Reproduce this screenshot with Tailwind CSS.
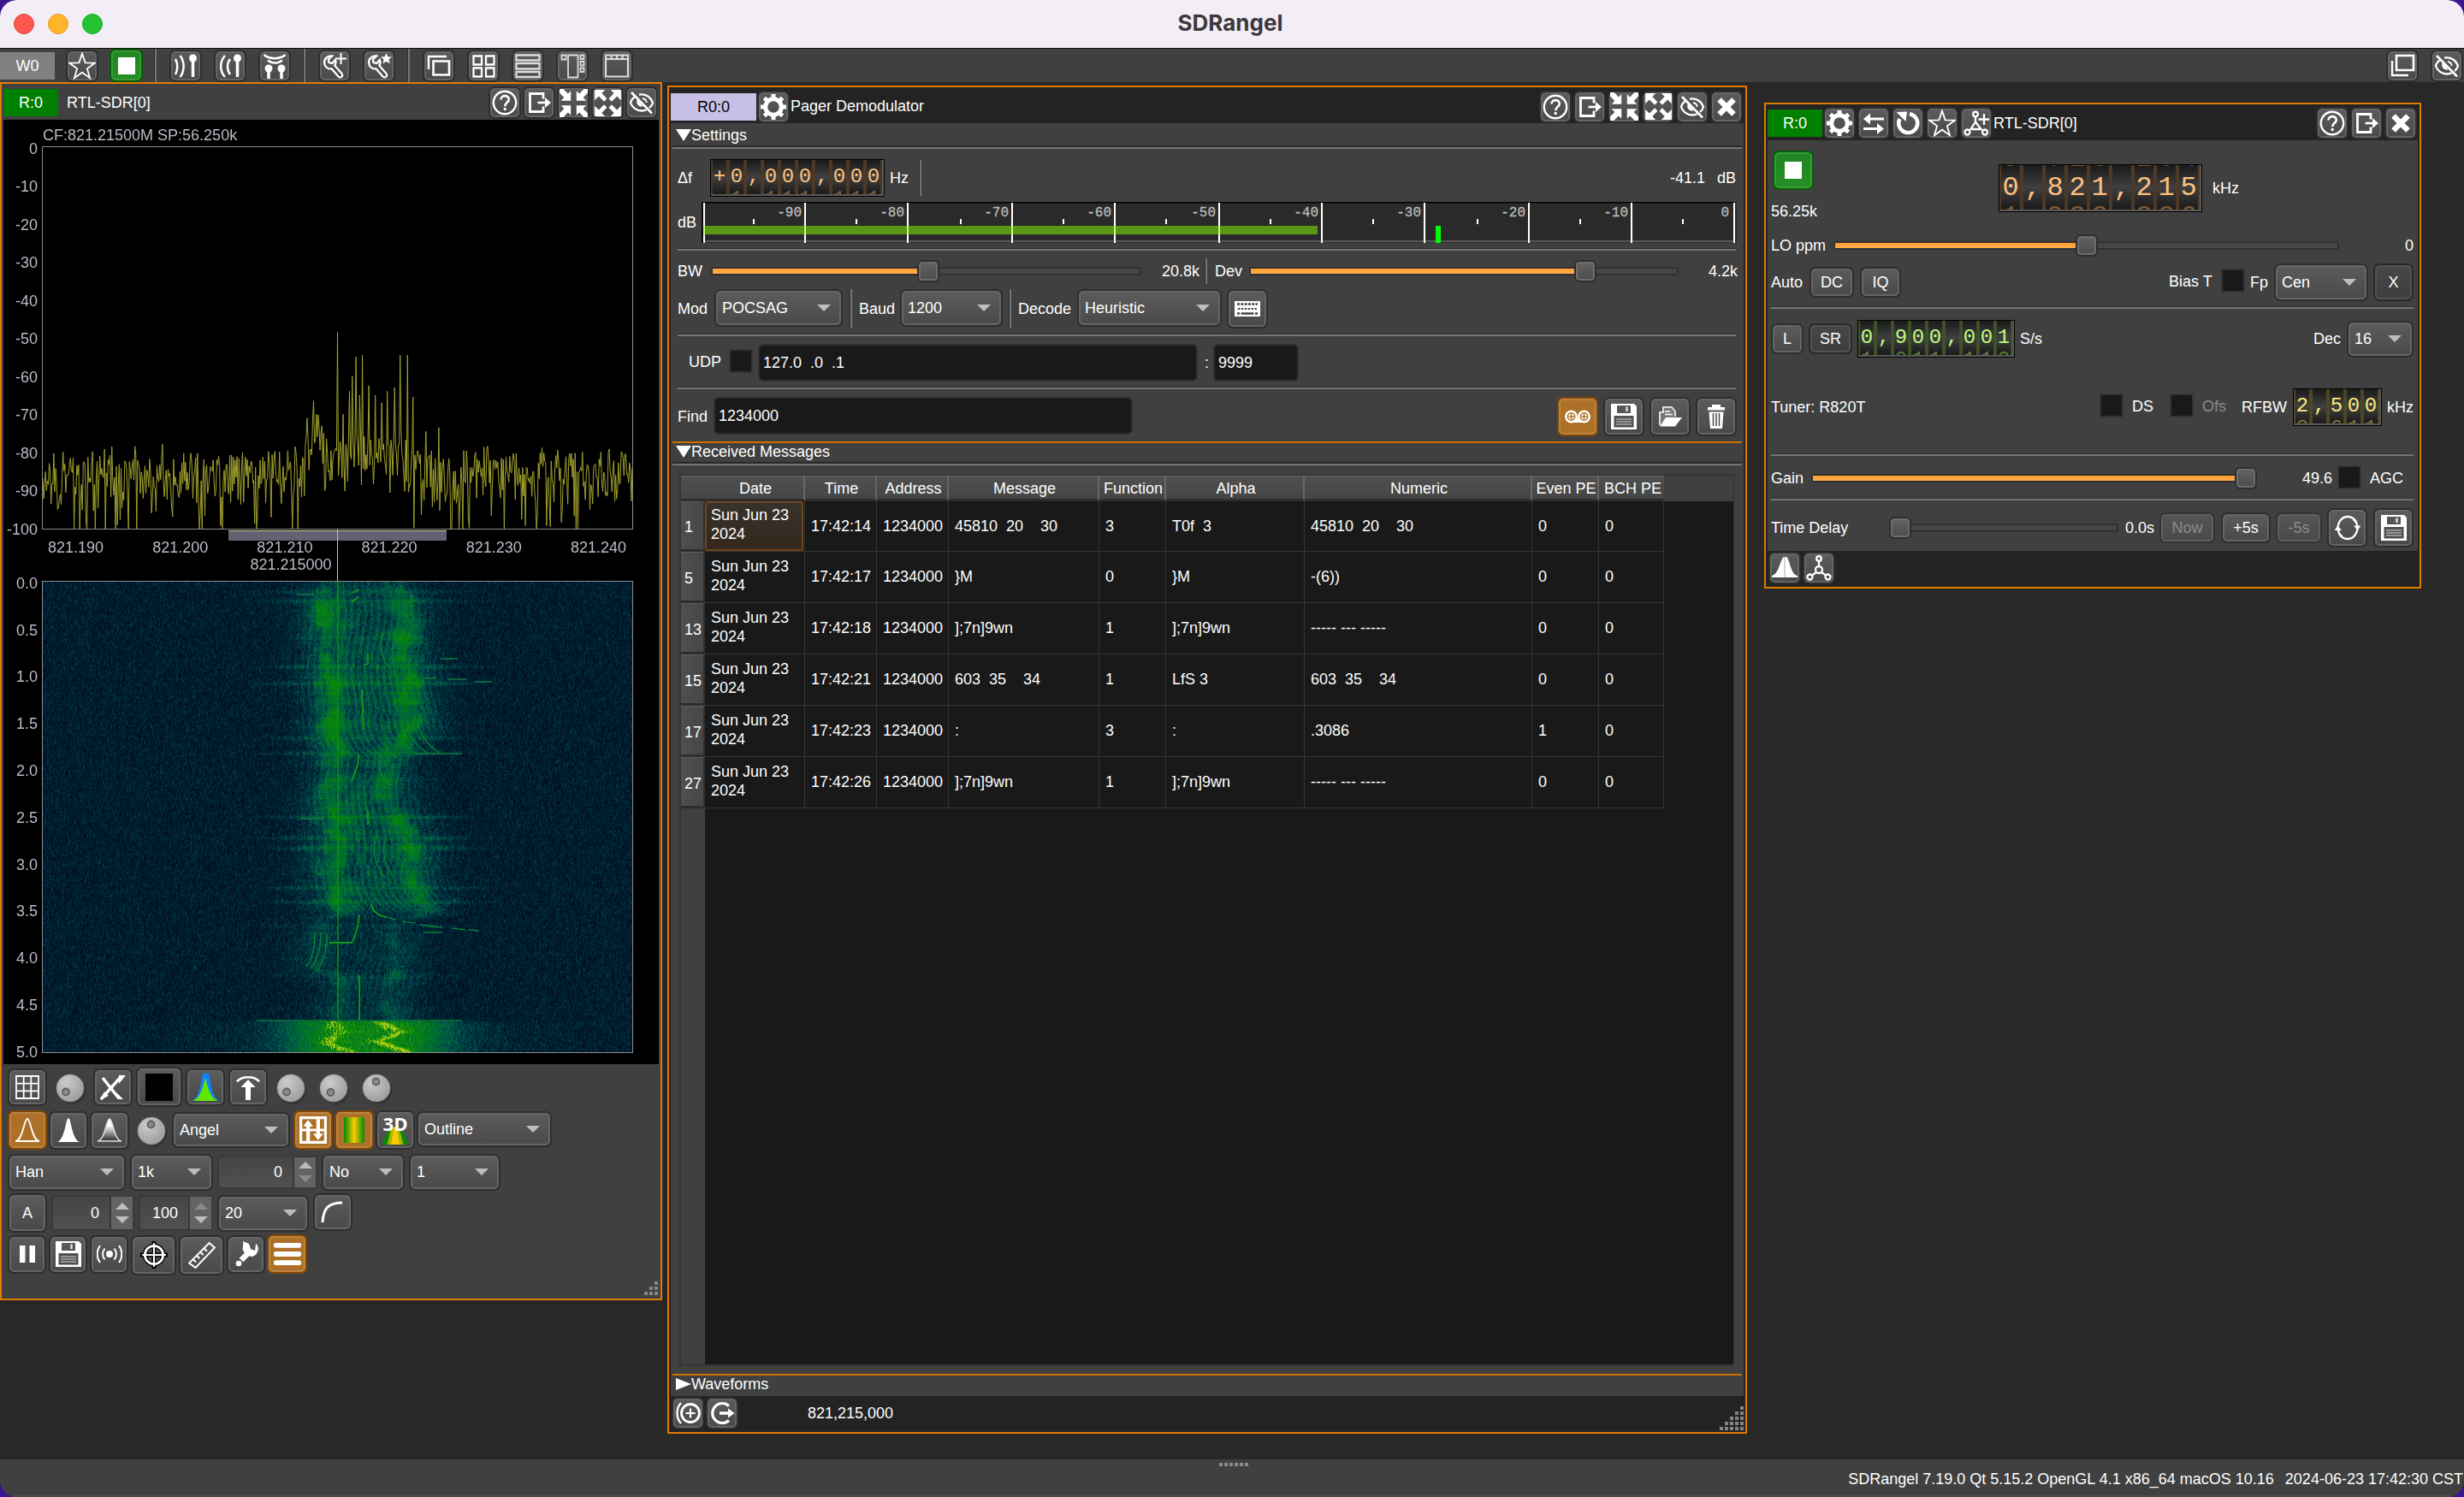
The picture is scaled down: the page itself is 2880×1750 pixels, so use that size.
<!DOCTYPE html>
<html lang="en">
<head>
<meta charset="utf-8">
<title>SDRangel</title>
<script src="https://cdn.jsdelivr.net/npm/@tailwindcss/browser@4"></script>
</head>
<body class="bg-[#3a1590] w-[2880px] h-[1750px] overflow-hidden">
<svg class="absolute size-0" xmlns="http://www.w3.org/2000/svg">
  <radialGradient id="kg" cx=".35" cy=".3" r=".8"><stop offset="0" stop-color="#cbcbcb"/><stop offset="1" stop-color="#999"/></radialGradient>
  <linearGradient id="bg1" x1="0" y1="0" x2="0" y2="1"><stop offset=".3" stop-color="#fff"/><stop offset=".9" stop-color="#444"/></linearGradient>
  <linearGradient id="cg1"><stop offset="0" stop-color="#078a07"/><stop offset=".2" stop-color="#5da505"/><stop offset=".5" stop-color="#ffcc00"/><stop offset=".8" stop-color="#5da505"/><stop offset="1" stop-color="#078a07"/></linearGradient>
  <symbol id="star" viewBox="0 0 30 30"><path d="M15 1.500l3.400 10.100 10.600.2-8.500 6.300 3 10.200L15 22.200l-8.500 6.100 3-10.200L1 11.800l10.600-.2z" fill="none" stroke="#fff" stroke-width="1.700"/></symbol>
  <symbol id="stop" viewBox="0 0 30 30"><path d="M5 5h20v20H5z" fill="#fff"/></symbol>
  <symbol id="rx" viewBox="0 0 30 30"><circle cx="23.500" cy="6" r="4.500" fill="#fff"/><path d="M23.500 8v20" stroke="#fff" stroke-width="3.500"/><path d="M3 7c3 5 3 13 0 18M8.500 3c5.500 7 5.500 18 0 25" fill="none" stroke="#fff" stroke-width="2.500"/></symbol>
  <symbol id="tx" viewBox="0 0 30 30"><circle cx="23.500" cy="6" r="4.500" fill="#fff"/><path d="M23.500 8v20" stroke="#fff" stroke-width="3.500"/><path d="M9 3c-6.500 7-6.500 18 0 25M15 7c-4 5-4 13 0 18" fill="none" stroke="#fff" stroke-width="2.500"/></symbol>
  <symbol id="mimo" viewBox="0 0 30 30"><circle cx="8" cy="18" r="4.500" fill="#fff"/><circle cx="23" cy="18" r="4.500" fill="#fff"/><path d="M8 19v11M23 19v11" stroke="#fff" stroke-width="3.500"/><path d="M2.500 2c6 5.500 19 5.500 25 0M7 8.500c5 4 12 4 17 0" fill="none" stroke="#fff" stroke-width="2.500"/></symbol>
  <symbol id="wrench" viewBox="0 0 30 30"><path d="M12 3.500c-5-.8-9.800 3.500-8.800 9 .9 4.500 5 6.500 8.300 5.800l8 9.200c1.500 1.500 4 1 4.600-.8.400-1.200 0-2.200-.8-3l-8-9c1.300-2.200 1.500-4.500.6-6.700l-3.600 4-3.800-1-.6-3.700z" fill="none" stroke="#fff" stroke-width="2.300"/></symbol>
  <symbol id="wplus" viewBox="0 0 30 30"><use href="#wrench"/><path d="M22.500 0v13M16 6.500h13" stroke="#fff" stroke-width="2"/></symbol>
  <symbol id="wstar" viewBox="0 0 30 30"><use href="#wrench"/><path d="M23.500 0l1.800 4.300 4.700.3-3.600 3 1.200 4.600-4.100-2.500-4 2.500 1.100-4.600-3.600-3 4.700-.3z" fill="#fff"/></symbol>
  <symbol id="cascade" viewBox="0 0 30 30"><path d="M8.500 9.500H27v16H8.500z" fill="none" stroke="#fff" stroke-width="2.600"/><path d="M3 19V4h21" fill="none" stroke="#fff" stroke-width="2.400"/></symbol>
  <symbol id="copyw" viewBox="0 0 30 30"><path d="M8 3h20v17H8z" fill="none" stroke="#fff" stroke-width="2.600"/><path d="M3 9v17h19" fill="none" stroke="#fff" stroke-width="2.400"/></symbol>
  <symbol id="tiles" viewBox="0 0 30 30"><path d="M3.500 3.500h9.500v10H3.500zM18 3.500h9.500v10H18zM3.500 17.500h9.500v10H3.500zM18 17.500h9.500v10H18z" fill="none" stroke="#fff" stroke-width="2.300"/></symbol>
  <symbol id="rows" viewBox="0 0 30 30"><path d="M1.500 2.500h27v6h-27zM1.500 12h27v6.500h-27zM1.500 22h27v6h-27z" fill="none" stroke="#ddd" stroke-width="2.300"/></symbol>
  <symbol id="cols" viewBox="0 0 30 30"><path d="M2.500 2.500h5v5h-5zM10 2.500h11.500v26H10zM24.500 2.500h4v4.500h-4zM24.500 10h4v4.500h-4zM24.500 17.500h4V22h-4z" fill="none" stroke="#ddd" stroke-width="1.800"/></symbol>
  <symbol id="tabs" viewBox="0 0 30 30"><path d="M2 2.500h26v25H2zM2 7h26M8.500 2.500V7M15 2.500V7M21.500 2.500V7" fill="none" stroke="#ddd" stroke-width="2.200"/></symbol>
  <symbol id="help" viewBox="0 0 30 30"><circle cx="15" cy="15" r="13.200" fill="none" stroke="#fff" stroke-width="2.400"/><path d="M10.500 11.500c0-6 9.300-5.700 9.300-.3 0 3.500-4.600 3.800-4.600 8" fill="none" stroke="#fff" stroke-width="2.600"/><circle cx="15.200" cy="22.500" r="1.700" fill="#fff"/></symbol>
  <symbol id="exit" viewBox="0 0 30 30"><path d="M20 10.500V4.500H4.500v21H20v-6" fill="none" stroke="#fff" stroke-width="2.800"/><path d="M13.500 15H26" stroke="#fff" stroke-width="2.600"/><path d="M22 9l7 6-7 6z" fill="#fff"/></symbol>
  <symbol id="shrink" viewBox="0 0 30 30"><path id="ar1" d="M0 0l4 0 5 5 3-3v10.500H1.500l3.300-3.300L0 4z" fill="#fff"/><use href="#ar1" transform="translate(30 0) scale(-1 1)"/><use href="#ar1" transform="translate(0 30) scale(1 -1)"/><use href="#ar1" transform="translate(30 30) scale(-1 -1)"/></symbol>
  <symbol id="expand" viewBox="0 0 30 30"><path id="ar2" d="M1 1h11L8.500 4.500l5.500 5.800-3 3-5.700-5.600L1 12z" fill="#fff"/><use href="#ar2" transform="translate(30 0) scale(-1 1)"/><use href="#ar2" transform="translate(0 30) scale(1 -1)"/><use href="#ar2" transform="translate(30 30) scale(-1 -1)"/></symbol>
  <symbol id="eye" viewBox="0 0 30 30"><path d="M8 7.500C4.500 9.500 2.500 13 2 15c1.500 5 6.500 9.500 13 9.500 2 0 4-.4 5.700-1.200M12 5.700c8-1.500 14 3.300 16 9.300-.7 2.300-2 4.300-4 6" fill="none" stroke="#fff" stroke-width="2.300"/><path d="M10 11c-2.500 5 1.500 9.500 6.500 8.500z" fill="#fff"/><path d="M16 10c3 .5 4.500 2.500 4.700 5" fill="none" stroke="#fff" stroke-width="1.800"/><path d="M3 3l24 24.500" stroke="#fff" stroke-width="2.600"/></symbol>
  <symbol id="close" viewBox="0 0 30 30"><path d="M6.500 6.500l17 17M23.500 6.500l-17 17" stroke="#fff" stroke-width="6.500"/></symbol>
  <symbol id="gear" viewBox="0 0 30 30"><circle cx="15" cy="15" r="9.300" fill="none" stroke="#fff" stroke-width="5"/><path d="M15 0v6M15 24v6M0 15h6M24 15h6M4.400 4.400l4.200 4.200M21.400 21.400l4.200 4.200M4.400 25.600l4.200-4.200M21.400 8.600l4.200-4.200" stroke="#fff" stroke-width="5"/></symbol>
  <symbol id="swap" viewBox="0 0 30 30"><path d="M7 10h20M3 21.500h20" stroke="#fff" stroke-width="3.200"/><path d="M11 3.500L3 10l8 6.500zM19 15l8 6.500-8 6.500z" fill="#fff"/></symbol>
  <symbol id="reload" viewBox="0 0 30 30"><path d="M17 4.200A11 11 0 1 1 5.500 10" fill="none" stroke="#fff" stroke-width="4.500"/><path d="M1.500 2L14 1.500 12.500 13z" fill="#fff"/></symbol>
  <symbol id="mol" viewBox="0 0 30 30"><g fill="none" stroke="#fff" stroke-width="2.300"><circle cx="15" cy="4" r="2.800"/><circle cx="15" cy="17" r="4"/><circle cx="4.500" cy="25.500" r="3"/><circle cx="25.500" cy="25.500" r="3"/><path d="M15 7v6M12 20l-5 3.500M18 20l5 3.500"/></g></symbol>
  <symbol id="molplus" viewBox="0 0 30 30"><g fill="none" stroke="#fff" stroke-width="2.300"><circle cx="14" cy="4.500" r="2.800"/><path d="M14 7.500v6L8.500 22h12L14 13.500"/><circle cx="4.500" cy="25.500" r="3"/><circle cx="25" cy="25.500" r="3"/><path d="M24 4v13M17.500 10.500H30"/></g></symbol>
  <symbol id="grid" viewBox="0 0 30 30"><path d="M2 2h26v26H2zM2 10.700h26M2 19.300h26M10.700 2v26M19.300 2v26" fill="none" stroke="#fff" stroke-width="1.800"/></symbol>
  <symbol id="cross" viewBox="0 0 30 30"><path d="M1 29L25 2M22 28L3 4" stroke="#fff" stroke-width="3.500"/><path d="M0 30l10-5-5-5zM22 1h8l-8 10zM20 22l7 7h-7z" fill="#fff"/></symbol>
  <symbol id="black" viewBox="0 0 30 30"><path d="M0 0h30v30H0z" fill="#000"/></symbol>
  <symbol id="peakc" viewBox="0 0 30 30"><path d="M0 29c7-1 10-13 12-29h7c2 16 5 28 11 29z" fill="#0a84ff"/><path d="M0 30c8-1 12-12 15-26 3 14 7 25 15 26z" fill="#62e600"/></symbol>
  <symbol id="up" viewBox="0 0 30 30"><path d="M2 8.500C7 1.500 23 1.500 28 8.500" fill="none" stroke="#fff" stroke-width="2.600"/><path d="M15 12v18" stroke="#fff" stroke-width="6"/><path d="M6.500 15L15 6l8.500 9z" fill="#fff"/></symbol>
  <symbol id="bell" viewBox="0 0 30 30"><path d="M1 28c9-1 10-26 14-26s5 25 14 26z" fill="none" stroke="#fff" stroke-width="1.800"/></symbol>
  <symbol id="bellf" viewBox="0 0 30 30"><path d="M2 29c9-3 10-28 13-28s4 25 13 28z" fill="#fff"/></symbol>
  <symbol id="bellg" viewBox="0 0 30 30"><path d="M1 28c9-1 10-26 14-26s5 25 14 26z" fill="url(#bg1)" stroke="#ddd" stroke-width="1.600"/></symbol>
  <symbol id="invert" viewBox="0 0 30 30"><path d="M1.500 1.500h27v27h-27zM1.500 15h27" fill="none" stroke="#fff" stroke-width="3"/><path d="M9.500 6v21M20.500 3v20" stroke="#fff" stroke-width="4"/><path d="M4 11l5.500-7 5.500 7zM15 19l5.500 7 5.500-7z" fill="#fff"/></symbol>
  <symbol id="cmap" viewBox="0 0 30 30"><path d="M3 0h24v30H3z" fill="url(#cg1)"/></symbol>
  <symbol id="threed" viewBox="0 0 34 34"><path d="M2 33l8-17h14l8 17z" fill="#078a07"/><path d="M8 33l5-19h8l5 19z" fill="#a8b800"/><path d="M12.500 33l3-19h3l3 19z" fill="#ffc800"/><text x="17" y="17.500" font-family="Open Sans, sans-serif" font-weight="700" font-size="21" fill="#fff" text-anchor="middle">3D</text></symbol>
  <symbol id="curve" viewBox="0 0 30 30"><path d="M3 27C4 10 10 4 26 4" fill="none" stroke="#fff" stroke-width="3"/></symbol>
  <symbol id="pause" viewBox="0 0 30 30"><path d="M6 5h6.500v20H6zM17.500 5H24v20h-6.500z" fill="#fff"/></symbol>
  <symbol id="save" viewBox="0 0 30 30"><path fill-rule="evenodd" d="M0 0h27l3 3v27H0zM7 2v9h16V2zM3.500 14v13.500h23V14z" fill="#fff"/><path d="M6 18h18M6 21h18M6 24h18" stroke="#aaa" stroke-width="1.300"/><path d="M18.500 3.500v5.500" stroke="#ddd" stroke-width="2.500"/></symbol>
  <symbol id="bcast" viewBox="0 0 30 30"><circle cx="15" cy="15" r="4" fill="#fff"/><path d="M9.500 8.500c-3 4-3 9 0 13M20.500 8.500c3 4 3 9 0 13M4 5c-4.500 6-4.500 14 0 20M26 5c4.500 6 4.500 14 0 20" fill="none" stroke="#fff" stroke-width="2"/></symbol>
  <symbol id="target" viewBox="0 0 30 30"><path d="M15 0v30M0 15h30" stroke="#000" stroke-width="4.500"/><circle cx="15" cy="15" r="10" fill="none" stroke="#000" stroke-width="5"/><circle cx="15" cy="15" r="10" fill="none" stroke="#fff" stroke-width="2.600"/><path d="M15 2v26M2 15h26" stroke="#fff" stroke-width="2"/></symbol>
  <symbol id="ruler" viewBox="0 0 30 30"><path d="M1 24L23 2l6 5L8 29zM5.500 20l3 3M9.500 16l3 3M13.500 12l3 3M17.500 8l3 3" fill="none" stroke="#fff" stroke-width="1.900"/></symbol>
  <symbol id="spanner" viewBox="0 0 30 30"><path d="M9 22L19 12" stroke="#fff" stroke-width="6.500"/><path d="M11 0l7 3 2 6 5 2 1-8c5 3 3 13-4 15l-6-1-5-6c-1-4 1-7 0-11z" fill="#fff"/><circle cx="6" cy="26" r="3.300" fill="#fff"/></symbol>
  <symbol id="menu" viewBox="0 0 30 30"><path d="M2.500 5.500h25M2.500 15h25M2.500 24.500h25" stroke="#fff" stroke-width="5.500" stroke-linecap="round"/></symbol>
  <symbol id="kbd" viewBox="0 0 30 30"><path d="M0 6h30v18H0z" fill="#fff"/><path d="M3 9.500h24" stroke="#444" stroke-width="2.600" stroke-dasharray="3 1.300"/><path d="M4 15h22" stroke="#444" stroke-width="2" stroke-dasharray="2.400 1.500"/><path d="M3 20.500h3M7.500 20.500h15M24 20.500h3" stroke="#444" stroke-width="2.600"/></symbol>
  <symbol id="reel" viewBox="0 0 30 30"><path d="M8 17h14v5H8z" fill="#fff"/><circle cx="7.500" cy="15" r="7.500" fill="#fff"/><circle cx="22.500" cy="15" r="7.500" fill="#fff"/><g fill="none" stroke="#ad7126" stroke-width="1.500"><circle cx="7.500" cy="15" r="4.200"/><circle cx="22.500" cy="15" r="4.200"/><path d="M7.500 12v6M4.500 15h6M22.500 12v6M19.500 15h6"/></g></symbol>
  <symbol id="open" viewBox="0 0 30 30"><path d="M3 25V10h4V4h10l4 5v6" fill="#777" stroke="#ddd" stroke-width="2"/><path d="M9 9h6M9 12.500h9" stroke="#fff" stroke-width="1.600"/><path d="M10 16h19l-8 10.500H3z" fill="#fff"/></symbol>
  <symbol id="trash" viewBox="0 0 30 30"><path d="M10 1h10v3h5v3.500H5V4h5z" fill="#fff"/><path d="M6.500 9.500h17L22 29H8z" fill="#fff"/><path d="M11.500 11v15M15 11v15M18.500 11v15" stroke="#4d4d4d" stroke-width="1.500"/></symbol>
  <symbol id="loop" viewBox="0 0 30 30"><path d="M8.500 25A12 12.500 0 0 1 3.500 16C3.500 8 8.500 2 15 2c5 0 8.500 3 10.500 7M21.500 5A12 12.500 0 0 1 26.500 14C26.500 22 21.500 28 15 28c-5 0-8.500-3-10.500-7" fill="none" stroke="#fff" stroke-width="2.300"/><path d="M-.5 18l4-5.500 4.500 5.500zM22 12.500l4.500 5.500 4-5.500z" fill="#fff"/></symbol>
  <symbol id="hump" viewBox="0 0 30 30"><path d="M0 26h30v-2c-8-1-9-20-13-22h-3C10 4 8 23 0 24z" fill="#fff"/><path d="M15 2v24" stroke="#aaa"/></symbol>
  <symbol id="addch" viewBox="0 0 30 30"><circle cx="18" cy="15" r="10.500" fill="none" stroke="#fff" stroke-width="2.800"/><path d="M18 9.500v11M12.500 15h11" stroke="#fff" stroke-width="2.200"/><path d="M7 3c-6 6-6 18 0 24" fill="none" stroke="#fff" stroke-width="2.400"/></symbol>
  <symbol id="goout" viewBox="0 0 30 30"><path d="M23 6.500a11.500 11.500 0 1 0 0 17" fill="none" stroke="#fff" stroke-width="3.200"/><path d="M12 15h12" stroke="#fff" stroke-width="3.500"/><path d="M22 9.500l7.500 5.500-7.500 5.500z" fill="#fff"/></symbol>
</svg>
<div id="app"></div>
<script>
// ---- small view helpers -------------------------------------------------
const icon = (n, s = 'size-[30px]') => `<svg class="${s} shrink-0"><use href="#${n}"/></svg>`;
const face = {
  n: 'border-[#2e2e2e] from-[#5c5c5c] to-[#494949] shadow-[inset_0_0_0_2px_#656565]',
  d: 'border-[#292929] from-[#484848] to-[#3e3e3e] shadow-[inset_0_0_0_2px_#525252] text-white',
  x: 'border-[#333333] from-[#565656] to-[#494949] shadow-[inset_0_0_0_2px_#5f5f5f] text-[#8c8c8c]',
  o: 'border-[#7f4703] from-[#ac7029] to-[#ad7126] shadow-[inset_0_0_0_2px_#bd8546]',
  g: 'border-[#075c07] from-[#218421] to-[#249024] shadow-[inset_0_0_0_2px_#3a9a3a]',
};
const btn = (body, size = 'size-[38px]', kind = 'n') =>
  `<div class="${size} ${face[kind]} shrink-0 flex items-center justify-center rounded-[7px] border-2 bg-linear-to-b">${body}</div>`;
const ib = (n, size, kind, s) => btn(icon(n, s), size, kind);
const down = `<svg class="w-4 h-2 shrink-0" viewBox="0 0 16 8"><path d="M0 0h16L8 8z" fill="#bdbdbd"/></svg>`;
const combo = (t, size) => `<div class="${size} ${face.n} shrink-0 flex items-center justify-between rounded-[7px] border-2 bg-linear-to-b pl-[7px] pr-[12px]">${t}${down}</div>`;
const spin = (t, size, up = '#bdbdbd', dn = '#bdbdbd') => `<div class="${size} shrink-0 flex items-stretch rounded-[4px] border-2 border-[#3a3a3a] bg-linear-to-b from-[#454545] to-[#505050]">
  <div class="flex-1 flex items-center justify-end pr-[12px]">${t}</div>
  <div class="w-[27px] flex flex-col items-center justify-center gap-2 border-l-2 border-[#383838] bg-[#636363]">
    <svg class="w-4 h-2" viewBox="0 0 16 8"><path d="M0 8h16L8 0z" fill="${up}"/></svg><svg class="w-4 h-2" viewBox="0 0 16 8"><path d="M0 0h16L8 8z" fill="${dn}"/></svg></div></div>`;
const box = (m = '') => `<div class="${m} size-7 shrink-0 border-2 border-[#343434] bg-[#191919]"></div>`;
const input = (t, size) => `<div class="${size} shrink-0 flex items-center whitespace-pre rounded-[6px] border-2 border-[#2f2f2f] bg-[#191919] pl-1">${t}</div>`;
const hr = (m = '') => `<div class="${m} h-[3px] shrink-0 border-t border-[#2c2c2c] bg-[#767676]"></div>`;
const vr = m => `<div class="${m} w-[3px] shrink-0 border-l border-[#2c2c2c] bg-[#767676]"></div>`;
const slider = (w, pos, fill = true) => `<div class="${w} relative h-[26px] shrink-0 flex items-center">
  <div class="h-[10px] w-full rounded-[3px] border-2 border-[#303030] bg-[#464646]"><div class="h-full bg-linear-to-b from-[#ff9d2c] to-[#ffae50]" style="width:${fill ? pos : 0}px"></div></div>
  <div class="absolute top-0 size-[26px] rounded-[6px] border-2 border-[#2e2e2e] bg-linear-to-b from-[#636363] to-[#4c4c4c] shadow-[inset_0_0_0_2px_#6c6c6c]" style="left:${pos}px"></div></div>`;
const knob = (m, a, b) => `<svg class="${m} size-9 shrink-0" viewBox="0 0 36 36"><circle cx="19.500" cy="20" r="16" fill="#353535"/><circle cx="17" cy="17" r="16" fill="url(#kg)" stroke="#8f8f8f" stroke-width=".6"/><circle cx="${a}" cy="${b}" r="4" fill="#8a8a8a" stroke="#606060" stroke-width="1.800"/></svg>`;
const tone = {
  amber: ['text-[#ffc07a]', 'text-[#7d5c36]', 'border-[#4d3925]'],
  green: ['text-[#bdfb7c]', 'text-[#5f7c3a]', 'border-[#3f5126]'],
  gold: ['text-[#fbe97a]', 'text-[#7d7038]', 'border-[#4d4823]'],
};
const dial = (prev, cur, next, t, big) => {
  const cell = big ? 'w-[26px] text-[32px] leading-[34px]' : 'w-5 text-[24px] leading-[26px]';
  const drop = big ? 'pt-[1px]' : '';
  return `<div class="shrink-0 flex ${big ? 'h-14' : 'h-11'} overflow-hidden border border-black bg-[#5a5a5a] pb-[2px] pr-[2px] font-['Liberation_Mono',monospace]">` +
    [...cur].map((c, i) => `<div class="${cell} ${tone[t][2]} h-full overflow-hidden flex flex-col items-center justify-center border-x-2 bg-linear-to-b from-[#1a1a1a] via-[#404040] to-[#1a1a1a]"><div class="${drop} ${tone[t][1]} whitespace-pre flex flex-col items-center"><span>${prev[i]}</span><span class="${tone[t][0]}">${c}</span><span>${next[i]}</span></div></div>`).join('') + `</div>`;
};
const L = (w, t, x = '') => `<span class="${w} ${x} shrink-0 whitespace-nowrap">${t}</span>`;
const grip = (n) => { let s = ''; for (let r = 0; r < n; r++) for (let c = 0; c <= r; c++) s += `<rect x="${(n - 1 - c) * 6}" y="${r * 6}" width="4" height="4" fill="#858585"/>`; return `<svg width="${n * 6 - 2}" height="${n * 6 - 2}">${s}</svg>`; };
const section = (t, open, h) => `<div class="${h} shrink-0 flex items-center pl-[6px]"><svg class="w-[18px] h-[14px]" viewBox="0 0 18 14"><path d="${open ? 'M0 0h18L9 14z' : 'M0 0v14L18 7z'}" fill="#fff"/></svg>${t}</div>`;
const hr4 = `<div class="mx-[2px] h-1 shrink-0 border-t-2 border-[#282828] bg-[#767676]"></div>`;

// ---- level meter --------------------------------------------------------
const meter = (() => {
  let s = '<rect width="1210" height="48" fill="#2a2a2a"/><path d="M0 .5H1208M.5 0V48" stroke="#000" stroke-width="2"/><path d="M2 46H1208" stroke="#585858" stroke-width="2"/><rect x="3" y="28" width="717" height="10" fill="#5b9717"/>';
  const major = [3, 121, 241, 363, 483, 605, 725, 845, 967, 1087, 1207];
  const minor = [61, 181, 303, 423, 543, 665, 785, 907, 1027, 1147];
  major.forEach((x, i) => {
    s += `<path d="M${x} 1V48" stroke="#fff" stroke-width="2"/>`;
    if (i < 7 && x < 720) s += `<path d="M${x} 28V38" stroke="#c6ff70" stroke-width="2"/>`;
    if (i) s += `<text x="${x - (i === 10 ? 6 : 4)}" y="17" font-size="16" font-family="Liberation Mono" fill="#bbb" stroke="#bbb" stroke-width=".3" text-anchor="end">${i === 10 ? 0 : -100 + i * 10}</text>`;
  });
  minor.forEach(x => s += `<path d="M${x} 20V26" stroke="#fff" stroke-width="2"/>`);
  return `<svg class="shrink-0" width="1210" height="48">${s}<path d="M861 28V48" stroke="#0f0" stroke-width="6"/></svg>`;
})();

// ---- received messages --------------------------------------------------
const rows = [
  [1, '17:42:14', '45810  20    30', 3, 'T0f  3', '45810  20    30', 0],
  [5, '17:42:17', '}M', 0, '}M', '-(6))', 0],
  [13, '17:42:18', '];7n]9wn', 1, '];7n]9wn', '----- --- -----', 0],
  [15, '17:42:21', '603  35    34', 1, 'LfS 3', '603  35    34', 0],
  [17, '17:42:23', ':', 3, ':', '.3086', 1],
  [27, '17:42:26', '];7n]9wn', 1, '];7n]9wn', '----- --- -----', 0]];
const gridCols = 'grid grid-cols-[28px_117px_84px_84px_176px_78px_162px_266px_78px_76px]';
const table = `<div class="ml-[10px] mt-[10px] w-[1233px] h-[1043px] shrink-0 border-2 border-r-1 border-[#353535] bg-[linear-gradient(90deg,#404040_28px,#191919_28px)]">
  <div class="${gridCols} h-[30px] bg-[#404040]">` +
  ['', 'Date', 'Time', 'Address', 'Message', 'Function', 'Alpha', 'Numeric', 'Even PE', 'BCH PE'].map((h, i) =>
    `<div class="flex items-center justify-center overflow-hidden whitespace-nowrap border-t border-t-[#646464] border-b-3 border-b-[#2d2d2d] bg-linear-to-b from-[#505050] to-[#454545] ${i && i < 9 ? 'border-r-2 border-r-[#676767]' : ''} pt-[2px] pl-[3px]">${h}</div>`).join('') +
  `</div>` + rows.map((r, i) => {
    const c = 'border-r border-b border-[#353535] pl-[7px] flex items-center whitespace-pre';
    return `<div class="${gridCols} ${i ? 'h-[60px]' : 'h-[59px]'}">
    <div class="flex items-center pl-1 pt-[3px] border-t border-t-[#606060] border-r-2 border-r-[#303030] border-b-3 border-b-[#2d2d2d] bg-linear-to-r from-[#4f4f4f] to-[#464646]">${r[0]}</div>
    <div class="${c} leading-[22px] pb-[4px] ${i ? '' : 'relative'}">${i ? '' : '<div class="absolute inset-0 right-[1px] rounded-[3px] border-2 border-[#70461b] bg-linear-to-b from-[#37322c] to-[#35281d]"></div>'}<span class="relative">Sun Jun 23\n2024</span></div>
    ${[r[1], '1234000', r[2], r[3], r[4], r[5], r[6], 0].map(v => `<div class="${c} pb-[1px]">${v}</div>`).join('')}
  </div>`;
  }).join('') + `</div>`;

// ---- spectrum axes ------------------------------------------------------
const axes = (() => {
  const t = (x, y, s, a) => `<text x="${x}" y="${y + 6.300}" text-anchor="${a}">${s}</text>`;
  let s = t(50, 17.500, 'CF:821.21500M SP:56.250k', 'start');
  for (let i = 0; i <= 10; i++) {
    s += t(44, 33.500 + i * 44.500, i ? -i * 10 : '0', 'end');
    s += t(44, 541.500 + i * 54.800, (i / 2).toFixed(1), 'end');
  }
  ['190', '200', '210', '220', '230', '240'].forEach((v, i) => s += t(88.500 + i * 122.200, 500, '821.' + v, 'middle'));
  return s + t(340, 520, '821.215000', 'middle');
})();

document.getElementById('app').innerHTML = `
<div class="w-[2880px] h-[1750px] overflow-hidden rounded-[20px] bg-[#282828] flex flex-col text-white text-[18px] leading-[22px] font-['Liberation_Sans',Arial,sans-serif]">
  <header class="h-14 shrink-0 bg-[#f3edf6] grid grid-cols-3 items-center">
    <div class="flex gap-4 pl-4"><i class="size-6 rounded-full bg-[#ff5650] border border-[#e2443f]"></i><i class="size-6 rounded-full bg-[#ffb429] border border-[#e09d1e]"></i><i class="size-6 rounded-full bg-[#26c234] border border-[#1bab29]"></i></div>
    <div class="-ml-1 -mt-[2px] text-center text-[#3b383d] font-bold text-[26px] leading-8 font-[Inter,sans-serif]">SDRangel</div><div></div>
  </header>
  <nav class="h-10 shrink-0 bg-[#404040] border-t border-[#101010] flex items-center pr-[1px] -mb-px">
    <div class="w-16 h-8 bg-[#808080] flex items-center justify-center">W0</div>
    <div class="ml-[13px] flex">${ib('star', undefined, 'n', 'size-8')}</div><div class="ml-[13px] flex">${ib('stop', 'size-[39px]', 'g')}</div>
    ${vr('ml-[13px] h-full')}
    <div class="ml-[15px] flex gap-[14px]">${ib('rx')}${ib('tx')}${ib('mimo')}</div>
    ${vr('ml-[14px] h-full')}
    <div class="ml-[15px] flex gap-[14px]">${ib('wplus')}${ib('wstar')}</div>
    ${vr('ml-[14px] h-full')}
    <div class="ml-[15px] flex gap-[14px]">${ib('cascade')}${ib('tiles')}${ib('rows')}${ib('cols')}${ib('tabs')}</div>
    <div class="ml-auto flex gap-[14px]">${ib('copyw')}${ib('eye')}</div>
  </nav>

  <main class="relative flex-1">
    <!-- main spectrum window -->
    <section class="absolute left-0 top-px w-[774px] h-[1424px] border-2 border-[#e07b00] bg-[#404040] px-[2px] flex flex-col">
      <div class="h-[42px] pt-[2px] shrink-0 flex items-center">
        <div class="w-16 h-8 bg-[#008000] flex items-center justify-center">R:0</div><span class="ml-[10px]">RTL-SDR[0]</span>
        <div class="ml-auto flex gap-[2px] pr-[1px]">${ib('help')}${ib('exit')}${ib('shrink', undefined, 'n', 'size-[33px]')}${ib('expand', undefined, 'n', 'size-[33px]')}${ib('eye')}</div>
      </div>
      <div class="relative h-[1104px] w-[766px] shrink-0 bg-black">
        <canvas id="plot" class="absolute -left-1 top-0" width="770" height="1104"></canvas>
        <svg class="absolute -left-1 top-0 font-['Liberation_Sans',sans-serif] text-[18px]" width="770" height="1104" fill="#bdbac6">${axes}</svg>
      </div>
      <div class="mt-[3px] pl-[5px] flex flex-col">
        <div class="h-[47px] flex items-center">${ib('grid', 'w-[46px] h-11')}${knob('ml-[10px] mt-[5px]', 12, 21.5)}<div class="ml-2 flex">${ib('cross', 'w-[46px] h-11')}</div><div class="ml-1 flex">${ib('black', 'w-[54px] h-[47px]', 'n', 'size-8')}</div><div class="ml-1 flex gap-1">${ib('peakc', 'w-[46px] h-11', 'n', 'size-8')}${ib('up', 'w-[46px] h-11')}</div>${knob('ml-[10px] mt-[5px]', 12, 21.5)}${knob('ml-[14px] mt-[5px]', 13.5, 22)}${knob('ml-[14px] mt-[5px]', 16.5, 9.5)}</div>
        <div class="mt-[4px] h-[46px] flex items-center">${ib('bell', 'size-[46px]', 'o')}<div class="ml-[2px] flex gap-[2px]">${ib('bellf', 'w-[46px] h-[45px]')}${ib('bellg', 'w-[46px] h-[45px]')}</div>${knob('ml-[9px] mt-1', 16.5, 9.5)}<div class="ml-[5px] flex">${combo('Angel', 'w-[138px] h-[42px]')}</div><div class="ml-1 mr-[2px] flex gap-[2px]">${ib('invert', 'size-[46px]', 'o', 'size-8')}${ib('cmap', 'size-[46px]', 'o')}${ib('threed', 'size-[46px]', 'n', 'size-[36px]')}</div><div class="-mt-[3px] flex">${combo('Outline', 'w-[158px] h-[42px]')}</div></div>
        <div class="mt-1 h-11 flex items-center gap-[5px]">${combo('Han', 'w-[138px] h-[43px]')}${combo('1k', 'w-[97px] h-[43px]')}${spin('0', 'w-[117px] h-[39px]', '#bdbdbd', '#8a8a8a')}${combo('No', 'w-[97px] h-[43px]')}${combo('1', 'w-[107px] h-[43px]')}</div>
        <div class="mt-[3px] h-[46px] flex items-center gap-[5px]">${btn('A', 'size-[46px]')}${spin('0', 'w-[97px] h-[42px]')}${spin('100', 'w-[87px] h-[42px]', '#8a8a8a')}${combo('20', 'w-[107px] h-[43px]')}<div class="-mt-[2px] flex">${ib('curve', 'w-[46px] h-11')}</div></div>
        <div class="mt-[2px] h-[46px] flex items-center">${ib('pause', 'size-[45px]')}<div class="ml-[3px] flex items-center gap-[3px]">${ib('save', 'size-[45px]')}${ib('bcast', 'size-[45px]')}<div class="mt-[2px] flex gap-[3px]">${ib('target', 'w-[53px] h-[47px]', 'n', 'size-8')}${ib('ruler', 'w-[53px] h-[47px]', 'n', 'size-8')}</div>${ib('spanner', 'size-[45px]')}</div><div class="ml-[2px] flex">${ib('menu', 'w-[47px] h-[46px]', 'o', 'size-8')}</div></div>
      </div>
      <div class="flex justify-end mt-[9px] pr-[1px]">${grip(3)}</div>
    </section>

    <!-- pager demodulator window -->
    <section class="absolute left-[780px] top-[5px] w-[1262px] h-[1576px] border-2 border-[#e07b00] bg-[#232323] px-[2px] flex flex-col">
      <div class="h-[42px] shrink-0 flex items-center">
        <div class="mt-1 w-[100px] h-8 bg-[#c8bfe7] text-black flex items-center justify-center">R0:0</div><div class="ml-px mr-px mt-[3px] flex">${ib('gear')}</div><span class="mt-[2px]">Pager Demodulator</span>
        <div class="mt-[3px] ml-auto flex gap-[2px] pr-[1px]">${ib('help')}${ib('exit')}${ib('shrink', undefined, 'n', 'size-[33px]')}${ib('expand', undefined, 'n', 'size-[33px]')}${ib('eye')}${ib('close')}</div>
      </div>
      <div class="h-[1488px] shrink-0 bg-[#404040] flex flex-col">
        ${section('Settings', true, 'h-[26px] pt-[2px]')}${hr4}
        <div class="mt-3 h-11 shrink-0 flex items-center pl-2 pr-[9px]">${L('w-[38px]', 'Δf')}${dial('           ', '+0,000,000', ' 1 111 111', 'amber')}${L('ml-[6px] w-[34px]', 'Hz')}${vr('h-[42px]')}${L('ml-auto mr-[14px]', '-41.1')}${L('', 'dB')}</div>
        <div class="mt-[6px] h-12 shrink-0 flex items-center pl-2">${L('w-7', 'dB')}${meter}</div>
        ${hr('mt-[6px] ml-2 mr-[9px]')}
        <div class="mt-[9px] h-[30px] shrink-0 flex items-center pl-2">${L('w-[39px]', 'BW')}${slider('w-[503px]', 241)}${L('w-[68px] text-right', '20.8k')}${vr('ml-[6px] h-full')}${L('ml-[9px] w-10', 'Dev')}${slider('w-[502px]', 380)}${L('w-[69px] text-right', '4.2k')}</div>
        <div class="mt-[6px] h-[46px] shrink-0 flex items-center pl-2">${L('w-[43px]', 'Mod')}<div class="-mt-[2px] flex">${combo('POCSAG', 'w-[150px] h-11')}</div>${vr('ml-2 h-full')}${L('ml-2 w-12', 'Baud')}<div class="-mt-[2px] flex">${combo('1200', 'w-[120px] h-11')}</div>${vr('ml-[7px] h-full')}${L('ml-2 w-[69px]', 'Decode')}<div class="-mt-[2px] flex">${combo('Heuristic', 'w-[169px] h-11')}</div><div class="ml-[6px] flex">${ib('kbd', 'w-12 h-[46px]')}</div></div>
        ${hr('mt-[6px] ml-2 mr-[9px]')}
        <div class="mt-[9px] h-11 shrink-0 flex items-center pl-[21px]">${L('w-[47px]', 'UDP', '-mt-[2px]')}${box('-mt-1')}<div class="ml-[6px] flex">${input('127.0  .0  .1', 'w-[514px] h-11')}</div>${L('ml-2 w-[10px]', ':')}${input('9999', 'w-[100px] h-11')}</div>
        ${hr('mt-[6px] ml-2 mr-[9px]')}
        <div class="mt-[9px] h-[46px] shrink-0 flex items-center pl-2 pr-2">${L('w-[42px]', 'Find')}<div class="-mt-[2px] flex">${input('1234000', 'w-[490px] h-11')}</div><div class="ml-auto flex gap-[6px]">${ib('reel', 'w-12 h-[46px]', 'o')}${ib('save', 'w-12 h-[46px]')}${ib('open', 'w-12 h-[46px]')}${ib('trash', 'w-12 h-[46px]')}</div></div>
        <div class="mt-[6px] mx-[2px] h-[2px] shrink-0 bg-[#cd7000]"></div>
        ${section('Received Messages', true, 'h-[22px] pb-[2px]')}${hr4}
        ${table}
        <div class="mt-[9px] mx-[2px] h-[2px] shrink-0 bg-[#cd7000]"></div>
        ${section('Waveforms', false, 'h-[20px]')}
      </div>
      <div class="h-[42px] shrink-0 flex items-start pl-[1px] pt-px">${ib('addch')}<div class="ml-[2px] flex">${ib('goout')}</div><span class="ml-[81px] mt-2">821,215,000</span><div class="ml-auto mt-[11px]">${grip(5)}</div></div>
    </section>

    <!-- device window -->
    <section class="absolute left-[2062px] top-[25px] w-[768px] h-[568px] border-2 border-[#e07b00] bg-[#232323] px-[2px] flex flex-col">
      <div class="h-[42px] shrink-0 flex items-center">
        <div class="mt-[2px] w-16 h-8 bg-[#008000] flex items-center justify-center">R:0</div>
        <div class="mt-[2px] ml-px flex gap-[2px]">${ib('gear')}${ib('swap')}${ib('reload')}${ib('star', undefined, 'n', 'size-8')}${ib('molplus')}</div><span class="ml-px mt-[1px]">RTL-SDR[0]</span>
        <div class="mt-[2px] ml-auto flex gap-[2px] pr-[1px]">${ib('help')}${ib('exit')}${ib('close')}</div>
      </div>
      <div class="h-[480px] shrink-0 bg-[#404040] flex flex-col pl-1 pr-[5px]">
        <div class="mt-3 h-[82px] shrink-0 flex items-start">
          <div class="w-[266px] pl-[2px] shrink-0"><div class="flex">${ib('stop', 'w-12 h-[46px]', 'g')}</div><div class="mt-[14px] -ml-[2px]">56.25k</div></div>
          <div class="mt-4 flex items-center">${dial('9 710 104', '0,821,215', '1 932 326', 'amber', true)}${L('ml-3', 'kHz')}</div>
        </div>
        <div class="mt-4 h-[26px] shrink-0 flex items-center">${L('w-[73px]', 'LO ppm')}${slider('w-[591px]', 283)}${L('ml-auto', '0')}</div>
        <div class="mt-2 h-11 shrink-0 flex items-center">${L('w-[45px]', 'Auto')}${btn('DC', 'w-[52px] h-9')}<div class="ml-[7px] flex">${btn('IQ', 'w-12 h-9')}</div>${L('ml-auto w-[61px]', 'Bias T', '-mt-[2px]')}${box('-mt-1')}${L('ml-[6px] w-7', 'Fp')}${combo('Cen', 'w-[110px] h-11')}<div class="ml-[6px] flex">${btn('X', 'w-[47px] h-11', 'd')}</div></div>
        ${hr('mt-[6px]')}
        <div class="mt-[13px] h-11 shrink-0 flex items-center">${btn('L', 'w-[38px] h-9')}<div class="ml-[6px] mr-[6px] flex">${btn('SR', 'w-[51px] h-9', 'd')}</div>${dial('         ', '0,900,001', '1 011 112', 'green')}${L('ml-[6px]', 'S/s')}${L('ml-auto w-[39px]', 'Dec')}${combo('16', 'w-[78px] h-[43px]')}</div>
        <div class="mt-9 h-11 shrink-0 flex items-center">${L('', 'Tuner: R820T')}${box('ml-auto -mt-1')}${L('ml-[10px] w-11', 'DS', '-mt-[2px]')}${box('-mt-1')}${L('ml-[10px] w-[46px]', 'Ofs', 'text-[#8c8c8c] -mt-[2px]')}${L('w-[60px]', 'RFBW')}${dial('     ', '2,500', '3 611', 'gold')}${L('ml-[6px] w-[31px]', 'kHz')}</div>
        ${hr('mt-8')}
        <div class="mt-[10px] h-8 shrink-0 flex items-center">${L('w-[47px]', 'Gain')}${slider('w-[520px]', 495)}${L('w-[89px] text-right', '49.6')}${box('ml-[6px] -mt-[2px]')}${L('ml-[10px]', 'AGC')}</div>
        ${hr('mt-[7px]')}
        <div class="mt-[9px] h-[46px] shrink-0 flex items-center">${L('w-[138px]', 'Time Delay')}${slider('w-[268px]', 0, false)}${L('ml-2 w-10', '0.0s')}${btn('Now', 'w-[65px] h-9', 'x')}<div class="ml-[7px] mr-[6px] flex">${btn('+5s', 'w-[58px] h-9')}</div>${btn('-5s', 'w-[54px] h-9', 'x')}<div class="ml-[6px] flex gap-[7px]">${ib('loop', 'w-[47px] h-[46px]')}${ib('save', 'w-[47px] h-[46px]')}</div></div>
      </div>
      <div class="flex gap-[2px] pl-[1px] pt-px">${ib('hump')}${ib('mol')}</div>
    </section>
  </main>

  <footer class="h-11 shrink-0 bg-[#404040] border-b-2 border-[#4c4c4c] flex flex-col">
    <div class="h-3 flex gap-[2px] pl-[1425px] pt-1">${'<i class="w-1 h-1 bg-[#8a8a8a]"></i>'.repeat(6)}</div>
    <div class="flex justify-end gap-[13px] pr-[1px] whitespace-pre"><span>SDRangel 7.19.0 Qt 5.15.2 OpenGL 4.1 x86_64 macOS 10.16</span><span>2024-06-23 17:42:30 CST</span></div>
  </footer>
</div>`;

// ---- spectrum trace and waterfall --------------------------------------
let seed = 20240623;
const rnd = () => { seed = (seed * 1664525 + 1013904223) >>> 0; return seed / 4294967296; };
const cv = document.getElementById('plot'), g = cv.getContext('2d');
const PX = 50, PW = 689, PY = 32, PH = 446, WY = 540, WH = 550;

// noise floor in dB plus the two FSK humps and discrete peaks
const peaks = [[309, -71], [317, -66.500], [320, -70], [326, -73], [344.500, -48.500], [351, -70], [358, -64], [362, -60], [366, -55], [370, -65], [373.500, -54.500], [381, -62.500], [388.500, -65], [396, -67], [403, -64], [411, -63], [418, -54.500], [426, -54.500], [433, -65.500], [448, -74.500], [463, -73.500]];
g.strokeStyle = '#a0a02e'; g.lineWidth = 1; g.beginPath();
const N = 640;
for (let i = 0; i <= N; i++) {
  const x = i / N * PW;
  let db = -84.500 + 10 * Math.log10(-Math.log(rnd() + 1e-9) + .004) * 1.080;
  const hump = 11 * Math.exp(-(((x - 320) / 11) ** 2)) + 8 * Math.exp(-(((x - 366) / 18) ** 2)) + 7 * Math.exp(-(((x - 415) / 20) ** 2));
  db += hump;
  db = Math.min(db, -77.500 - rnd() * 3 + hump * .7);
  for (const p of peaks) if (Math.abs(x - p[0]) < .54) db = p[1];
  const y = PY + Math.min(1, -db / 100) * PH;
  i ? g.lineTo(PX + x, y) : g.moveTo(PX + x, y);
}
g.stroke();

// waterfall: keyframes of [time, left centre, right centre, level]
const keys = [[0, 335, 410, .45], [.15, 330, 418, .7], [.3, 330, 421, .9], [.8, 332, 420, .95], [1, 337, 428, 1], [1.4, 340, 430, .95], [1.55, 337, 432, 1], [1.7, 342, 415, .95], [2, 342, 403, .8], [2.3, 338, 403, .9], [2.5, 345, 412, .95], [2.8, 344, 430, .9], [3.1, 338, 430, .95], [3.4, 342, 434, .9], [3.52, 352, 448, .55], [3.6, 322, 414, .3], [3.9, 322, 413, .45], [4.1, 320, 411, .4], [4.2, 348, 409, .6], [4.35, 348, 409, .4], [4.6, 342, 408, .5], [4.66, 342, 408, .4]];
const stops = [[0, 0, 4, 22], [.2, 0, 24, 44], [.36, 0, 54, 66], [.5, 0, 88, 72], [.66, 0, 116, 44], [.78, 6, 130, 14], [.9, 30, 150, 8], [1, 170, 205, 20]];
const color = v => {
  v = Math.max(0, Math.min(1, v));
  let k = 1; while (k < stops.length - 1 && v > stops[k][0]) k++;
  const a = stops[k - 1], b = stops[k], f = (v - a[0]) / (b[0] - a[0]);
  return [a[1] + (b[1] - a[1]) * f, a[2] + (b[2] - a[2]) * f, a[3] + (b[3] - a[3]) * f];
};
// coarse value noise that breaks the bands into patches
const CW = 72, CH = 60, coarse = Float32Array.from({ length: CW * CH }, rnd);
const patch = (x, y) => {
  const fx = x / 10, fy = y / 10, ix = fx | 0, iy = fy | 0, u = fx - ix, w = fy - iy, at = (a, b) => coarse[b * CW + a];
  return (at(ix, iy) * (1 - u) + at(ix + 1, iy) * u) * (1 - w) + (at(ix, iy + 1) * (1 - u) + at(ix + 1, iy + 1) * u) * w;
};
const img = g.createImageData(PW, WH);
const prev = Float32Array.from({ length: PW }, rnd);
const burstL = [[4.67, 340], [4.78, 350], [4.9, 331], [5, 362]], burstR = [[4.67, 392], [4.78, 420], [4.88, 390], [5, 428]];
const flares = [.1, .2, .9, 1.08, 1.66, 1.82, 2.5, 2.72, 2.83, 3.25, 3.4, 3.65, 4.18];
const lerp = (ks, t, j) => { let k = 1; while (k < ks.length - 1 && t > ks[k][0]) k++; const a = ks[k - 1], b = ks[k]; const f = Math.max(0, Math.min(1, (t - a[0]) / (b[0] - a[0]))); return a[j] + (b[j] - a[j]) * f; };
const G = (d, w) => Math.exp(-(d * d) / (w * w));
let rowGain = 1;
for (let y = 0; y < WH; y++) {
  const t = y / WH * 5, burst = t > 4.67;
  rowGain = rowGain * .5 + (.75 + rnd() * .5) * .5;
  const l = lerp(keys, t, 1) + (rnd() - .5) * 3, r = lerp(keys, t, 2) + (rnd() - .5) * 3, a = lerp(keys, t, 3) * rowGain;
  let flare = 0; for (const f of flares) flare = Math.max(flare, G(t - f, .022));
  const bend = t > 1.4 && t < 1.85 ? 20 * ((t - 1.4) / .45) ** 2.500 : t > 3 && t < 3.52 ? 22 * ((t - 3) / .52) ** 3 : t > 3.7 && t < 4.15 ? -12 * ((t - 3.7) / .45) ** 2 : 4 * Math.sin(t * 5);
  for (let x = 0; x < PW; x++) {
    prev[x] = prev[x] * .45 + rnd() * .55;
    const n = prev[x] - .5, p = patch(x, y);
    let v = .215 + n * .42;
    if (burst) {
      const d = Math.abs(x - 380), q = .75 + rowGain * .25;
      v += .48 * q * G(Math.max(0, d - 40), 60) + .08 * G(d, 210);
      v += (.1 + .22 * p) * (G(x - lerp(burstL, t, 1) + n * 12, 9) + G(x - lerp(burstR, t, 1) + n * 12, 9));
    } else {
      const mid = (l + r) / 2, half = (r - l) / 2, d = Math.max(0, Math.abs(x - mid) - half);
      const stripe = .5 + .5 * Math.cos((x - bend * (.5 + Math.max(0, x - 300) / 140)) * 2 * Math.PI / 7.600);
      const env = G(d, 36 + flare * 26);
      const core = Math.max(G(x - l, 13 + 8 * (p - .5)), G(x - r, 14 + 10 * (p - .5)));
      v += a * (env * (.1 + .16 * p + .16 * stripe * (1 - core * .7) + flare * .1) + core * (.16 + .2 * p));
      v = Math.min(v, .8);
    }
    const c = color(v), o = (y * PW + x) * 4;
    img.data[o] = c[0]; img.data[o + 1] = c[1]; img.data[o + 2] = c[2]; img.data[o + 3] = 255;
  }
}
g.putImageData(img, PX, WY);
const stroke = (c, w, d) => { g.strokeStyle = c; g.lineWidth = w; g.stroke(new Path2D(d)); };
stroke('#12961a', 1.800, 'M430 624v12l-5 2M423 666l2 48M420 742q-3 20-9 31M430 808v16M434 917q2 12 17 15M420 929q-2 22-9 33h-26M420 1000v52M420 549l-8 4M419 558l-8 6');
stroke('#0b7c3c', 1.600, 'M451 932l12 3M470 937l15 2M490 941l18 2M502 943l16 1M528 945l16 2M548 947l12 1M495 950h22M495 653h15M523 654h22M555 657h20M515 630h20M485 741h55M350 817h28M347 555h20M300 1053h240');
stroke('#0a7f34', 1.400, 'M375 950q0 28-12 42M382 952q0 28-12 44M368 950q0 28-10 40M443 740q-2 30 14 38M475 712q6 16 24 28M488 706q6 22 26 34M440 836q-8 30 10 50M451 836q-8 30 10 50M448 600q-8 20 6 40M462 600q-6 24 0 50');
stroke('#0e8f0e', 1.500, 'M395 540V1074');
stroke('#c9cf8f', 1, 'M394.500 479V540');
g.fillStyle = '#666073'; g.fillRect(267, 480, 255, 12);
g.fillStyle = '#c9cf8f'; g.fillRect(267, 480, 255, 1); g.fillRect(394, 480, 1, 12);
g.strokeStyle = '#8c8c8c'; g.lineWidth = 1;
g.strokeRect(49.500, 31.500, 690, 447);
g.strokeRect(49.500, 539.500, 690, 551);
</script>
</body>
</html>
